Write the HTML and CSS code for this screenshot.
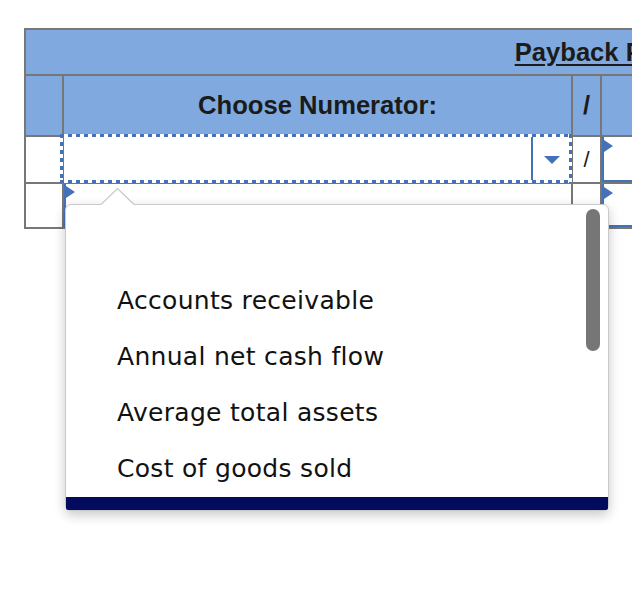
FILE: index.html
```html
<!DOCTYPE html>
<html lang="en">
<head>
    <meta charset="UTF-8">
    <meta name="viewport" content="width=device-width, initial-scale=1.0">
    <title>Payback Period</title>
    <link rel="stylesheet" href="styles.css">
</head>
<body>
    <table class="sheet">
        <colgroup>
            <col class="col-side">
            <col class="col-main">
            <col class="col-div">
            <col class="col-entry">
            <col class="col-rest">
        </colgroup>
        <tr class="row-title">
            <td colspan="5" class="head title"><span>Payback Period</span></td>
        </tr>
        <tr class="row-head">
            <td class="head"></td>
            <td class="head">Choose Numerator:</td>
            <td class="head">/</td>
            <td class="head"></td>
            <td class="head"></td>
        </tr>
        <tr class="row-first">
            <td></td>
            <td>
                <div class="picker focused">
                    <div class="picker-arrow"><span class="caret-down"></span></div>
                </div>
            </td>
            <td class="slash">/</td>
            <td class="entry"><span class="flag"></span></td>
            <td></td>
        </tr>
        <tr class="row-second">
            <td></td>
            <td>
                <div class="picker marked"><span class="flag"></span></div>
            </td>
            <td></td>
            <td class="entry"><span class="flag"></span></td>
            <td></td>
        </tr>
    </table>

    <div class="menu">
        <svg class="menu-notch" width="34" height="18" viewBox="0 0 34 18">
            <polygon points="0,16.5 16.5,0.5 33,16.5 33,18 0,18" fill="#fff"/>
            <polyline points="0,16.5 16.5,0.5 33,16.5" fill="none" stroke="#c9c9c9" stroke-width="1.2"/>
        </svg>
        <div class="menu-list">
            <div class="option"></div>
            <div class="option">Accounts receivable</div>
            <div class="option">Annual net cash flow</div>
            <div class="option">Average total assets</div>
            <div class="option">Cost of goods sold</div>
            <div class="option active"></div>
        </div>
        <div class="scroll-thumb"></div>
    </div>
</body>
</html>
```

FILE: styles.css
```css
body {
    margin: 0;
    background-color: #fff;
    font-family: "Liberation Sans", Arial, sans-serif;
    color: #1b1b1b;
    overflow: hidden;
    height: 596px;
    position: relative;
}

/* worksheet grid */
.sheet {
    border-collapse: separate;
    border-spacing: 0;
    table-layout: fixed;
    width: 1172px;
    margin: 28px 0 0 24px;
    border-top: 2px solid #777;
    border-left: 2px solid #777;
}

.col-side { width: 38px; }
.col-main { width: 509px; }
.col-div { width: 29px; }
.col-entry { width: 62px; }
.col-rest { width: 532px; }

.sheet td {
    box-sizing: border-box;
    padding: 0;
    border-right: 2px solid #777;
    border-bottom: 2px solid #777;
    vertical-align: top;
}

.row-title td { height: 46px; }
.row-head td { height: 61px; }
.row-first td { height: 47px; }
.row-second td { height: 45px; }

.sheet td.head {
    background-color: #80aadf;
    font-weight: bold;
    font-size: 25.6px;
    text-align: center;
    vertical-align: middle;
}

.title span {
    text-decoration: underline;
    text-decoration-thickness: 2px;
    text-underline-offset: 3px;
}

.sheet td.slash {
    font-size: 22px;
    text-align: center;
    vertical-align: middle;
}

/* select boxes */
.picker {
    height: 45px;
    display: flex;
    justify-content: flex-end;
    box-sizing: border-box;
    position: relative;
}

/* focus ring: white frame with square dots over the grid lines */
.picker.focused::before,
.picker.focused::after {
    content: "";
    position: absolute;
    top: -3px;
    left: -4px;
    right: -1px;
    bottom: -1px;
    pointer-events: none;
}

.picker.focused::before {
    border: 3px solid #fff;
}

.picker.focused::after {
    background:
        repeating-linear-gradient(90deg, #4472b9 0 4px, transparent 4px 8px) left top / 100% 3px no-repeat,
        repeating-linear-gradient(90deg, #4472b9 0 4px, transparent 4px 8px) left bottom / 100% 3px no-repeat,
        repeating-linear-gradient(180deg, #4472b9 0 4px, transparent 4px 8px) left top / 3px 100% no-repeat,
        repeating-linear-gradient(180deg, #4472b9 0 4px, transparent 4px 8px) right top / 3px 100% no-repeat;
}

.picker.marked {
    height: 43px;
    justify-content: flex-start;
    border-left: 2px solid #4472b9;
}

.picker-arrow {
    width: 39px;
    margin-right: 1px;
    border-left: 2px solid #4472b9;
    box-sizing: border-box;
    display: flex;
    align-items: center;
    justify-content: center;
}

.caret-down {
    width: 0;
    height: 0;
    border-left: 8px solid transparent;
    border-right: 8px solid transparent;
    border-top: 8px solid #4472b9;
    margin-left: 1px;
}

.flag {
    display: block;
    width: 0;
    height: 0;
    margin-top: 2px;
    border-top: 6px solid transparent;
    border-bottom: 6px solid transparent;
    border-left: 9px solid #4472b9;
}

.sheet td.entry {
    box-shadow: inset 2px -2px 0 #4472b9;
}

.entry .flag {
    margin-left: 2px;
    margin-top: 3px;
}

/* dropdown menu */
.menu {
    position: absolute;
    left: 65px;
    top: 204px;
    width: 544px;
    height: 307px;
    box-sizing: border-box;
    background-color: #fff;
    border: 1px solid #c9c9c9;
    border-radius: 6px;
    box-shadow: 0 4px 12px rgba(0, 0, 0, 0.22);
}

.menu-notch {
    position: absolute;
    left: 35px;
    top: -17px;
}

.menu-list {
    height: 100%;
    overflow: hidden;
    box-sizing: border-box;
    padding-top: 12px;
    border-radius: 5px 5px 2px 2px;
    font-family: "DejaVu Sans", Verdana, sans-serif;
    font-size: 25px;
    letter-spacing: 0.3px;
    color: #111;
}

.option {
    height: 56px;
    line-height: 56px;
    padding-left: 51px;
    white-space: nowrap;
}

.option.active {
    background-color: #020b5e;
}

.scroll-thumb {
    position: absolute;
    right: 8px;
    top: 4px;
    width: 14px;
    height: 142px;
    border-radius: 7px;
    background-color: #767676;
}
```
